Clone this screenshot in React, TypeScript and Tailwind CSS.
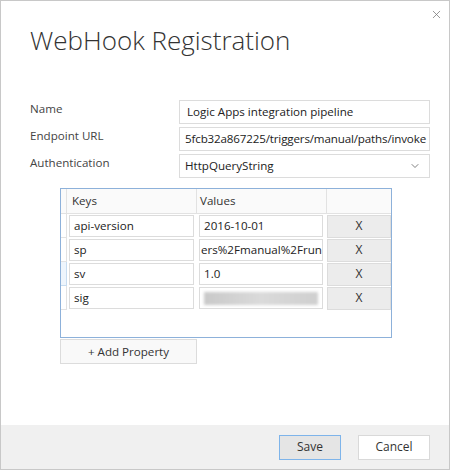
import { X, ChevronDown } from 'lucide-react';

type Param = { key: string; value: string; hidden?: boolean };

const params: Param[] = [
  { key: 'api-version', value: '2016-10-01' },
  { key: 'sp', value: 'ers%2Fmanual%2Frun' },
  { key: 'sv', value: '1.0' },
  { key: 'sig', value: '', hidden: true },
];

const font = { fontFamily: '"Open Sans", "Noto Sans", sans-serif' };

function Field({ children }: { children: React.ReactNode }) {
  return (
    <div className="h-[24px] border border-[#dcdcdc] bg-white flex items-center px-[7px] overflow-hidden whitespace-nowrap text-[11.6px] text-[#222]">
      {children}
    </div>
  );
}

export default function App() {
  return (
    <div
      className="w-[450px] h-[470px] border border-[#c8c8c8] bg-white flex flex-col relative"
      style={font}
    >
      <button className="absolute top-[7px] right-[6px] text-[#777]">
        <X size={13} strokeWidth={1.4} />
      </button>

      <div className="flex-1 pl-[29px] pt-[22px]">
        <h1 className="text-[26px] font-light leading-[34px] text-[#333]">WebHook Registration</h1>

        <div className="mt-[43px] grid grid-cols-[149px_251px] gap-y-[3px] items-center">
          <span className="text-[11.6px] text-[#444] self-start">Name</span>
          <Field>Logic Apps integration pipeline</Field>
          <span className="text-[11.6px] text-[#444] self-start">Endpoint URL</span>
          <Field>
            <span className="-ml-[2px] tracking-[-0.15px]">5fcb32a867225/triggers/manual/paths/invoke</span>
          </Field>
          <span className="text-[11.6px] text-[#444] self-start">Authentication</span>
          <div className="h-[24px] border border-[#dcdcdc] bg-white flex items-center justify-between pl-[5px] pr-[8px] text-[11.6px] text-[#222]">
            <span>HttpQueryString</span>
            <ChevronDown size={12} strokeWidth={1.5} className="text-[#555]" />
          </div>
        </div>

        <div className="ml-[30px] mt-[10px] w-[332px] h-[150px] border border-[#8db1da] bg-white">
          <div className="flex h-[25px] border-b border-[#e2e2e2] bg-[#fafafa] text-[11.6px] text-[#333]">
            <div className="w-[6px] border-r border-[#e2e2e2]" />
            <div className="w-[130px] border-r border-[#e2e2e2] pl-[5px] flex items-center">Keys</div>
            <div className="w-[130px] border-r border-[#e2e2e2] pl-[3px] flex items-center">Values</div>
            <div className="flex-1" />
          </div>
          {params.map((p, i) => (
            <div key={p.key} className="flex h-[24px] items-center text-[11.6px] text-[#222]">
              <div
                className={
                  i === 2
                    ? 'w-[6px] h-full border-r border-b border-[#c7dcf0] bg-[#eef5fc]'
                    : 'w-[6px] h-full border-r border-b border-[#e2e2e2]'
                }
              />
              <div className="w-[130px] pl-[2px] pr-[3px]">
                <div className="h-[22px] border border-[#dcdcdc] flex items-center px-[4px]">{p.key}</div>
              </div>
              <div className="w-[130px] pl-[2px] pr-[4px]">
                <div className="h-[22px] border border-[#dcdcdc] flex items-center px-[4px] overflow-hidden whitespace-nowrap">
                  {p.hidden ? (
                    <div className="w-[117px] h-[13px] bg-gradient-to-r from-[#c9c9c9] via-[#dadada] to-[#cfcfcf] blur-[1.5px]" />
                  ) : (
                    <span className={i === 1 ? '-ml-[3px]' : ''}>{p.value}</span>
                  )}
                </div>
              </div>
              <button className="flex-1 h-[23px] bg-[#ececec] border border-[#dcdcdc] text-[12px] text-[#333]">
                X
              </button>
            </div>
          ))}
        </div>

        <button className="mt-[1px] ml-[30px] w-[137px] h-[25px] border border-[#dcdcdc] bg-[#f9f9f9] text-[11.6px] text-[#333]">
          + Add Property
        </button>
      </div>

      <div className="h-[44px] bg-[#f0f0f0] flex items-center justify-end gap-[17px] pr-[19px]">
        <button className="w-[62px] h-[25px] border border-[#7eb4ea] bg-[#e5e5e5] text-[12px] text-[#333]">
          Save
        </button>
        <button className="w-[72px] h-[25px] border border-[#d9d9d9] bg-white text-[12px] text-[#333]">
          Cancel
        </button>
      </div>
    </div>
  );
}
